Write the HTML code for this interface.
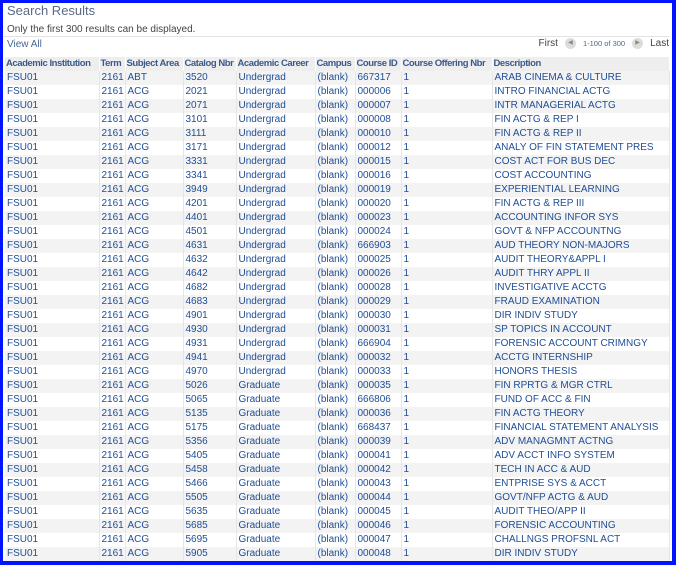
<!DOCTYPE html>
<html><head><style>
html,body{margin:0;padding:0}
body{width:676px;height:565px;overflow:hidden;background:#fff;font-family:"Liberation Sans",Arial,sans-serif;position:relative}
.frame{position:absolute;left:0;top:0;width:669px;height:558px;border:3px solid #0014ff;border-right-width:4px;border-bottom-width:4px;background:#fff}
.title{position:absolute;left:7px;top:3px;font-size:13px;color:#5a6a85}
.note{position:absolute;left:7px;top:24px;font-size:10px;color:#444}
.bar{position:absolute;left:4px;top:36px;width:665px;height:20px;border-top:1px solid #e2e2e2}
.va{position:absolute;left:7px;top:39px;font-size:10px;color:#47698f}
.nav{position:absolute;right:7px;top:38px;font-size:10px;color:#444;display:flex;align-items:center;gap:3px}
.nav .c{width:11px;height:11px;border-radius:50%;background:#dcdcdc;display:inline-block;position:relative;margin:0 4px;color:#888;font-size:6px;line-height:11px;text-align:center}
.nav small{font-size:7.5px;color:#47698f}
table{position:absolute;left:5px;top:57px;border-collapse:collapse;table-layout:fixed;width:665px}
th,td{height:14px;padding:0 0 0 2px;font-size:10px;white-space:nowrap;overflow:hidden;line-height:14px;border-right:1px solid #e6e6e6}
th{background:#eeeeee;color:#3b5a8a;font-weight:bold;text-align:left;font-size:9.5px;letter-spacing:-0.45px;border-right:1px solid #fff;padding-left:1px}
td{color:#1f4e96}
tr:nth-child(even) td{background:#f3f3f3}
</style></head><body>
<div class="frame"></div>
<div class="title">Search Results</div>
<div class="note">Only the first 300 results can be displayed.</div>
<div class="bar"></div>
<div class="va">View All</div>
<div class="nav">First <span class="c">◀</span> <small>1-100 of 300</small> <span class="c">▶</span>Last</div>
<table>
<colgroup><col style="width:94px"><col style="width:26px"><col style="width:58px"><col style="width:53px"><col style="width:79px"><col style="width:40px"><col style="width:46px"><col style="width:91px"><col></colgroup>
<tr><th>Academic Institution</th><th>Term</th><th>Subject Area</th><th>Catalog Nbr</th><th>Academic Career</th><th>Campus</th><th>Course ID</th><th>Course Offering Nbr</th><th>Description</th></tr>
<tr><td>FSU01</td><td>2161</td><td>ABT</td><td>3520</td><td>Undergrad</td><td>(blank)</td><td>667317</td><td>1</td><td>ARAB CINEMA &amp; CULTURE</td></tr>
<tr><td>FSU01</td><td>2161</td><td>ACG</td><td>2021</td><td>Undergrad</td><td>(blank)</td><td>000006</td><td>1</td><td>INTRO FINANCIAL ACTG</td></tr>
<tr><td>FSU01</td><td>2161</td><td>ACG</td><td>2071</td><td>Undergrad</td><td>(blank)</td><td>000007</td><td>1</td><td>INTR MANAGERIAL ACTG</td></tr>
<tr><td>FSU01</td><td>2161</td><td>ACG</td><td>3101</td><td>Undergrad</td><td>(blank)</td><td>000008</td><td>1</td><td>FIN ACTG &amp; REP I</td></tr>
<tr><td>FSU01</td><td>2161</td><td>ACG</td><td>3111</td><td>Undergrad</td><td>(blank)</td><td>000010</td><td>1</td><td>FIN ACTG &amp; REP II</td></tr>
<tr><td>FSU01</td><td>2161</td><td>ACG</td><td>3171</td><td>Undergrad</td><td>(blank)</td><td>000012</td><td>1</td><td>ANALY OF FIN STATEMENT PRES</td></tr>
<tr><td>FSU01</td><td>2161</td><td>ACG</td><td>3331</td><td>Undergrad</td><td>(blank)</td><td>000015</td><td>1</td><td>COST ACT FOR BUS DEC</td></tr>
<tr><td>FSU01</td><td>2161</td><td>ACG</td><td>3341</td><td>Undergrad</td><td>(blank)</td><td>000016</td><td>1</td><td>COST ACCOUNTING</td></tr>
<tr><td>FSU01</td><td>2161</td><td>ACG</td><td>3949</td><td>Undergrad</td><td>(blank)</td><td>000019</td><td>1</td><td>EXPERIENTIAL LEARNING</td></tr>
<tr><td>FSU01</td><td>2161</td><td>ACG</td><td>4201</td><td>Undergrad</td><td>(blank)</td><td>000020</td><td>1</td><td>FIN ACTG &amp; REP III</td></tr>
<tr><td>FSU01</td><td>2161</td><td>ACG</td><td>4401</td><td>Undergrad</td><td>(blank)</td><td>000023</td><td>1</td><td>ACCOUNTING INFOR SYS</td></tr>
<tr><td>FSU01</td><td>2161</td><td>ACG</td><td>4501</td><td>Undergrad</td><td>(blank)</td><td>000024</td><td>1</td><td>GOVT &amp; NFP ACCOUNTNG</td></tr>
<tr><td>FSU01</td><td>2161</td><td>ACG</td><td>4631</td><td>Undergrad</td><td>(blank)</td><td>666903</td><td>1</td><td>AUD THEORY NON-MAJORS</td></tr>
<tr><td>FSU01</td><td>2161</td><td>ACG</td><td>4632</td><td>Undergrad</td><td>(blank)</td><td>000025</td><td>1</td><td>AUDIT THEORY&amp;APPL I</td></tr>
<tr><td>FSU01</td><td>2161</td><td>ACG</td><td>4642</td><td>Undergrad</td><td>(blank)</td><td>000026</td><td>1</td><td>AUDIT THRY APPL II</td></tr>
<tr><td>FSU01</td><td>2161</td><td>ACG</td><td>4682</td><td>Undergrad</td><td>(blank)</td><td>000028</td><td>1</td><td>INVESTIGATIVE ACCTG</td></tr>
<tr><td>FSU01</td><td>2161</td><td>ACG</td><td>4683</td><td>Undergrad</td><td>(blank)</td><td>000029</td><td>1</td><td>FRAUD EXAMINATION</td></tr>
<tr><td>FSU01</td><td>2161</td><td>ACG</td><td>4901</td><td>Undergrad</td><td>(blank)</td><td>000030</td><td>1</td><td>DIR INDIV STUDY</td></tr>
<tr><td>FSU01</td><td>2161</td><td>ACG</td><td>4930</td><td>Undergrad</td><td>(blank)</td><td>000031</td><td>1</td><td>SP TOPICS IN ACCOUNT</td></tr>
<tr><td>FSU01</td><td>2161</td><td>ACG</td><td>4931</td><td>Undergrad</td><td>(blank)</td><td>666904</td><td>1</td><td>FORENSIC ACCOUNT CRIMNGY</td></tr>
<tr><td>FSU01</td><td>2161</td><td>ACG</td><td>4941</td><td>Undergrad</td><td>(blank)</td><td>000032</td><td>1</td><td>ACCTG INTERNSHIP</td></tr>
<tr><td>FSU01</td><td>2161</td><td>ACG</td><td>4970</td><td>Undergrad</td><td>(blank)</td><td>000033</td><td>1</td><td>HONORS THESIS</td></tr>
<tr><td>FSU01</td><td>2161</td><td>ACG</td><td>5026</td><td>Graduate</td><td>(blank)</td><td>000035</td><td>1</td><td>FIN RPRTG &amp; MGR CTRL</td></tr>
<tr><td>FSU01</td><td>2161</td><td>ACG</td><td>5065</td><td>Graduate</td><td>(blank)</td><td>666806</td><td>1</td><td>FUND OF ACC &amp; FIN</td></tr>
<tr><td>FSU01</td><td>2161</td><td>ACG</td><td>5135</td><td>Graduate</td><td>(blank)</td><td>000036</td><td>1</td><td>FIN ACTG THEORY</td></tr>
<tr><td>FSU01</td><td>2161</td><td>ACG</td><td>5175</td><td>Graduate</td><td>(blank)</td><td>668437</td><td>1</td><td>FINANCIAL STATEMENT ANALYSIS</td></tr>
<tr><td>FSU01</td><td>2161</td><td>ACG</td><td>5356</td><td>Graduate</td><td>(blank)</td><td>000039</td><td>1</td><td>ADV MANAGMNT ACTNG</td></tr>
<tr><td>FSU01</td><td>2161</td><td>ACG</td><td>5405</td><td>Graduate</td><td>(blank)</td><td>000041</td><td>1</td><td>ADV ACCT INFO SYSTEM</td></tr>
<tr><td>FSU01</td><td>2161</td><td>ACG</td><td>5458</td><td>Graduate</td><td>(blank)</td><td>000042</td><td>1</td><td>TECH IN ACC &amp; AUD</td></tr>
<tr><td>FSU01</td><td>2161</td><td>ACG</td><td>5466</td><td>Graduate</td><td>(blank)</td><td>000043</td><td>1</td><td>ENTPRISE SYS &amp; ACCT</td></tr>
<tr><td>FSU01</td><td>2161</td><td>ACG</td><td>5505</td><td>Graduate</td><td>(blank)</td><td>000044</td><td>1</td><td>GOVT/NFP ACTG &amp; AUD</td></tr>
<tr><td>FSU01</td><td>2161</td><td>ACG</td><td>5635</td><td>Graduate</td><td>(blank)</td><td>000045</td><td>1</td><td>AUDIT THEO/APP II</td></tr>
<tr><td>FSU01</td><td>2161</td><td>ACG</td><td>5685</td><td>Graduate</td><td>(blank)</td><td>000046</td><td>1</td><td>FORENSIC ACCOUNTING</td></tr>
<tr><td>FSU01</td><td>2161</td><td>ACG</td><td>5695</td><td>Graduate</td><td>(blank)</td><td>000047</td><td>1</td><td>CHALLNGS PROFSNL ACT</td></tr>
<tr><td>FSU01</td><td>2161</td><td>ACG</td><td>5905</td><td>Graduate</td><td>(blank)</td><td>000048</td><td>1</td><td>DIR INDIV STUDY</td></tr>
</table>
</body></html>
